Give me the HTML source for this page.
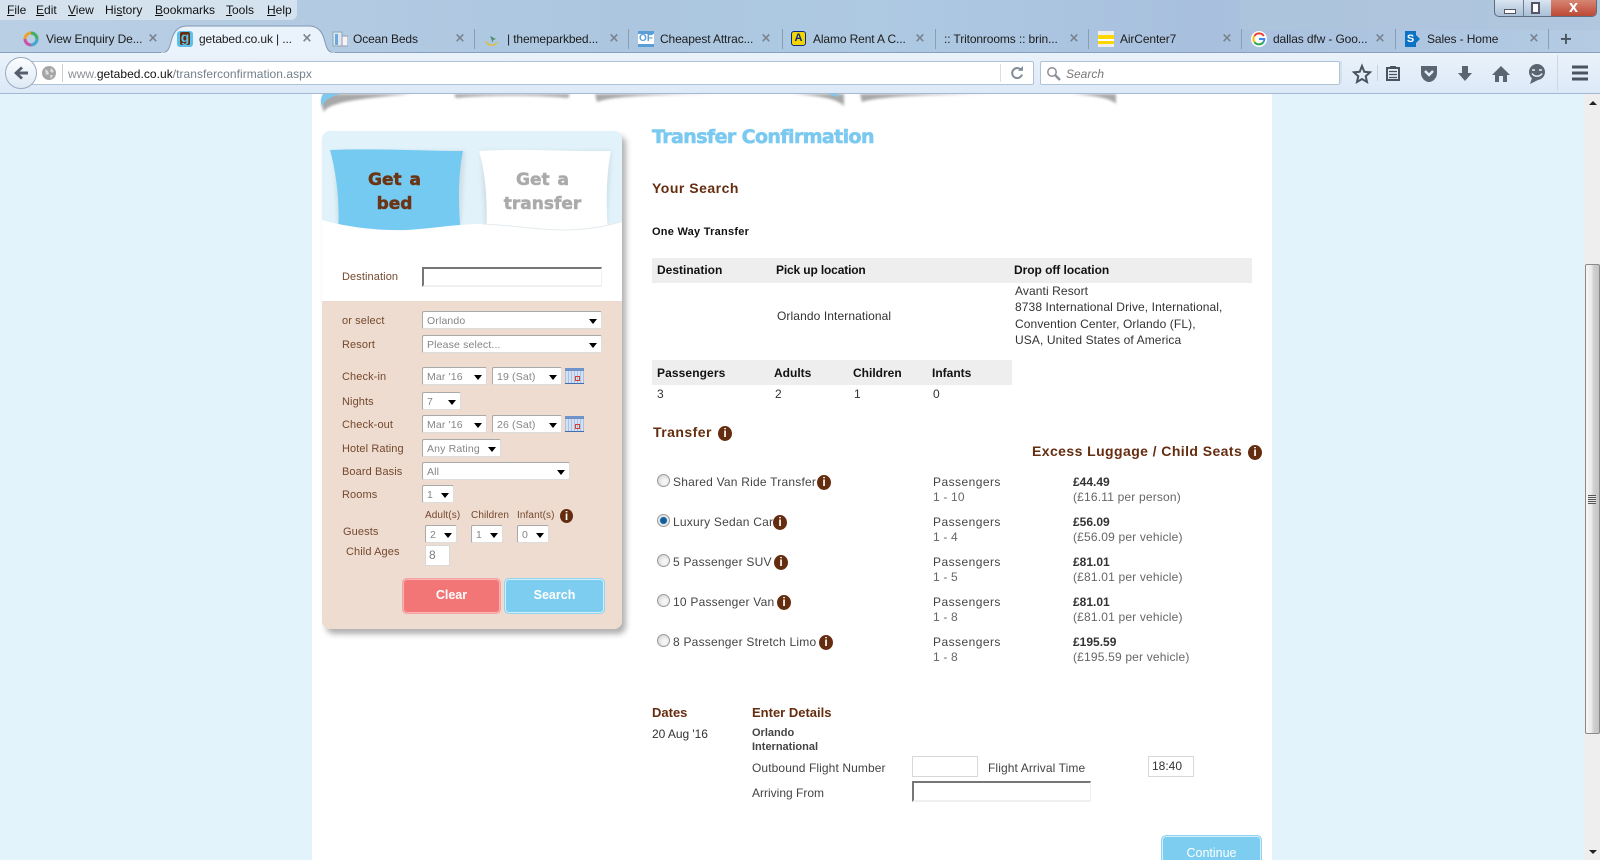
<!DOCTYPE html>
<html lang="en"><head><meta charset="utf-8"><title>getabed.co.uk</title>
<style>
html,body{margin:0;padding:0;width:1600px;height:860px;overflow:hidden;background:#e2f3fb}
body{position:relative;font-family:"Liberation Sans",Arial,sans-serif;font-size:12px;color:#222}
.a,.t,.s,.i,.c{position:absolute}
.t{white-space:nowrap;line-height:16px;height:16px}
.m{font-size:12px;color:#111;top:2px}
.m u{text-decoration:underline}
.tb{font-size:12px;color:#1c1c1c;top:31px;letter-spacing:-.12px}
.c{top:32px;width:14px;height:14px;color:#78818c;font:bold 13px/14px "DejaVu Sans",sans-serif;text-align:center}
.sep{position:absolute;top:29px;width:1px;height:20px;background:#8b9db0}
.l{font-size:11px;color:#74492e;letter-spacing:.1px}
.h{font-weight:bold;color:#652d10}
.b{font-weight:bold;color:#111}
.n{color:#333;letter-spacing:.1px}
.g{color:#666;letter-spacing:.18px}
.r{color:#444;letter-spacing:.45px}
.q{color:#444;letter-spacing:.22px}
.s{background:#fff;border:1px solid #a9a9a9;border-right-color:#ddd;border-bottom-color:#ddd;border-radius:2px;box-sizing:border-box;height:18px;font-size:10.5px;line-height:18px;color:#858585;padding-left:4px;letter-spacing:.15px}
.s:after{content:"";position:absolute;right:4px;top:7px;border:4px solid transparent;border-top:5px solid #000;border-bottom:0}
.i{width:14px;height:15px;border-radius:50%;background:#652d10;color:#fff;font:bold 12px/15px "Liberation Sans",sans-serif;text-align:center}
.inp{position:absolute;background:#fff;box-sizing:border-box;border:1px solid #d8d8d8}
.inset{border-top:2px solid #767676;border-left:2px solid #767676;border-right:1px solid #f0f0f0;border-bottom:2px solid #f0f0f0}
.rad{position:absolute;width:11px;height:11px;border-radius:50%;border:1px solid #9a9a9a;background:radial-gradient(circle at 60% 60%,#f4f4f4 25%,#c8c8c8)}
.btn{position:absolute;box-sizing:border-box;border-radius:5px;color:#fff;font-weight:bold;font-size:12.5px;text-align:center}
.cal{position:absolute;width:19px;height:16px;background:repeating-linear-gradient(90deg,#a8c0e4 0 1px,#d5e1f2 1px 3px);border-top:3px solid #6f93c8;box-sizing:border-box;height:16px;border-bottom:1px solid #3f6db0}
.cal:after{content:"";position:absolute;left:10px;top:5px;width:3px;height:3px;border:1px solid #d6402c}
</style></head><body>

<!-- window chrome -->
<div class="a" style="left:0;top:0;width:1600px;height:53px;background:linear-gradient(90deg,#b9cfe4 0,#acc6e0 40%,#aec9e2 55%,#a8c0de 75%,#b4cbe3 100%);"></div>
<div class="a" style="left:1240px;top:0;width:360px;height:30px;background:#aec4dc;opacity:.7"></div>
<div class="a" style="left:0;top:52px;width:1600px;height:1px;background:#84a0bb"></div>
<div class="a" style="left:0;top:0;width:297px;height:20px;background:#d9e5f0;border-radius:0 0 6px 0;opacity:.85"></div>
<div class="t m" style="left:7px"><u>F</u>ile</div>
<div class="t m" style="left:36px"><u>E</u>dit</div>
<div class="t m" style="left:68px"><u>V</u>iew</div>
<div class="t m" style="left:105px">Hi<u>s</u>tory</div>
<div class="t m" style="left:155px"><u>B</u>ookmarks</div>
<div class="t m" style="left:226px"><u>T</u>ools</div>
<div class="t m" style="left:267px"><u>H</u>elp</div>

<!-- window buttons -->
<div class="a" style="left:1494px;top:-2px;width:103px;height:19px;border:1px solid #5d6d80;border-radius:0 0 5px 5px;background:linear-gradient(#dce7f2,#aabfd6);overflow:hidden;box-sizing:border-box">
 <div class="a" style="left:56px;top:0;width:47px;height:19px;background:linear-gradient(#d98a78,#b8402c)"></div>
 <div class="a" style="left:28px;top:0;width:1px;height:19px;background:#6c7e92"></div>
 <div class="a" style="left:9px;top:10px;width:10px;height:3px;background:#fff;border:1px solid #556"></div>
 <div class="a" style="left:36px;top:3px;width:9px;height:12px;background:#fff;border:2px solid #556;box-sizing:border-box"></div>
 <div class="a" style="left:55px;top:0;width:47px;text-align:center;color:#fff;font:bold 12px/19px 'DejaVu Sans',sans-serif">X</div>
</div>

<!-- tabs -->
<svg class="a" style="left:160px;top:25px" width="176" height="29"><path d="M0 28 C8 28 9 24 11 17 C13 8 17 1 27 1 H149 C159 1 163 8 165 17 C167 24 168 28 176 28 Z" fill="#eaf2fb" stroke="#7f98b2"/><path d="M1 28.500H175" stroke="#eaf2fb" stroke-width="2"/></svg>
<svg class="a" style="left:23px;top:31px" width="16" height="16"><circle cx="8" cy="8" r="6" fill="none" stroke="#f0a030" stroke-width="3"/><path d="M8 2a6 6 0 0 1 6 6" fill="none" stroke="#3fb06a" stroke-width="3"/><path d="M2 8a6 6 0 0 0 6 6" fill="none" stroke="#c752b0" stroke-width="3"/><path d="M14 8a6 6 0 0 1-6 6" fill="none" stroke="#40a8d8" stroke-width="3"/></svg>
<div class="t tb" style="left:46px">View Enquiry De...</div><div class="c" style="left:146px">×</div>
<div class="a" style="left:177px;top:31px;width:16px;height:16px;border-radius:3px;background:#5cc0e8"></div>
<div class="a" style="left:180px;top:32px;width:10px;height:13px;border-radius:2px;background:#652d10"></div>
<div class="t" style="left:177px;top:29px;width:16px;text-align:center;font:bold 14px/16px 'Liberation Sans',sans-serif;color:#5cc0e8">g</div>
<div class="t tb" style="left:199px">getabed.co.uk | ...</div><div class="c" style="left:300px">×</div>
<svg class="a" style="left:332px;top:31px" width="16" height="16"><rect x="1" y="1" width="9" height="14" fill="#dfe8f2" stroke="#8aa"/><rect x="3" y="3" width="3" height="11" fill="#6fa8dc"/><rect x="10" y="5" width="6" height="10" fill="#f2f5f8" stroke="#99a"/></svg>
<div class="t tb" style="left:353px">Ocean Beds</div><div class="c" style="left:453px">×</div><div class="sep" style="left:474px"></div>
<svg class="a" style="left:484px;top:32px" width="16" height="14"><path d="M2 9a6 6 0 0 0 11 1" fill="none" stroke="#d8c040" stroke-width="1.500"/><path d="M6 4l6 3-3 1v3z" fill="#4a9060"/></svg>
<div class="t tb" style="left:507px">| themeparkbed...</div><div class="c" style="left:607px">×</div><div class="sep" style="left:628px"></div>
<div class="a" style="left:638px;top:31px;width:16px;height:16px;background:#fff;border-top:3px solid #5a9ed8;border-bottom:3px solid #5a9ed8;box-sizing:border-box;font:bold 10px/10px 'Liberation Sans',sans-serif;color:#5a9ed8;text-align:center">OF</div>
<div class="t tb" style="left:660px">Cheapest Attrac...</div><div class="c" style="left:759px">×</div><div class="sep" style="left:782px"></div>
<div class="a" style="left:791px;top:31px;width:15px;height:15px;background:#f2d400;border:1.500px solid #0a2a8a;border-radius:3px;box-sizing:border-box;font:bold 11px/12px 'Liberation Sans',sans-serif;color:#0a2a8a;text-align:center">A</div>
<div class="t tb" style="left:813px">Alamo Rent A C...</div><div class="c" style="left:913px">×</div><div class="sep" style="left:935px"></div>
<div class="t tb" style="left:944px">:: Tritonrooms :: brin...</div><div class="c" style="left:1067px">×</div><div class="sep" style="left:1088px"></div>
<div class="a" style="left:1098px;top:31px;width:16px;height:16px;background:linear-gradient(#eee 0 4px,#fed700 4px 8px,#fff 8px 10px,#fed700 10px 13px,#eee 13px)"></div>
<div class="t tb" style="left:1120px">AirCenter7</div><div class="c" style="left:1220px">×</div><div class="sep" style="left:1241px"></div>
<svg class="a" style="left:1251px;top:31px" width="16" height="16"><circle cx="8" cy="8" r="8" fill="#fff"/><path d="M12.800 5A5.500 5.500 0 0 0 3.400 5" fill="none" stroke="#ea4335" stroke-width="2"/><path d="M3.400 5a5.500 5.500 0 0 0 0 6" fill="none" stroke="#fbbc05" stroke-width="2"/><path d="M3.400 11a5.500 5.500 0 0 0 9 0" fill="none" stroke="#34a853" stroke-width="2"/><path d="M8 8h5.400a5.500 5.500 0 0 1-1 3" fill="none" stroke="#4285f4" stroke-width="2"/></svg>
<div class="t tb" style="left:1273px">dallas dfw - Goo...</div><div class="c" style="left:1373px">×</div><div class="sep" style="left:1395px"></div>
<div class="a" style="left:1405px;top:31px;width:11px;height:16px;background:#0b72c4;color:#fff;font:bold 11px/16px 'Liberation Sans',sans-serif;text-align:center">S</div>
<svg class="a" style="left:1415px;top:33px" width="6" height="12"><path d="M0 1l5 5-5 5" fill="#0b72c4"/></svg>
<div class="t tb" style="left:1427px">Sales - Home</div><div class="c" style="left:1527px">×</div><div class="sep" style="left:1548px"></div>
<div class="t" style="left:1558px;top:30px;width:16px;text-align:center;font:bold 16px/18px 'DejaVu Sans',sans-serif;color:#4a5560">+</div>

<!-- toolbar -->
<div class="a" style="left:0;top:53px;width:1600px;height:41px;background:linear-gradient(#eaf2fb,#dce9f7);border-bottom:1px solid #a4b9cf;box-sizing:border-box"></div>
<div class="a" style="left:20px;top:61px;width:1014px;height:24px;background:#fff;border:1px solid #b0c2d6;box-sizing:border-box;border-radius:2px"></div>
<div class="a" style="left:5px;top:57px;width:32px;height:32px;border-radius:50%;background:linear-gradient(#fbfdff,#dfe9f4);border:1px solid #98aac0;box-sizing:border-box"></div>
<svg class="a" style="left:13px;top:65px" width="16" height="16"><path d="M1 8L8 1.500 10 3.500 6.500 6.500H15V9.500H6.500L10 12.500 8 14.500Z" fill="#555f6b"/></svg>
<svg class="a" style="left:42px;top:66px" width="14" height="14"><circle cx="7" cy="7" r="7" fill="#a5a5a5"/><path d="M3 3l3 2 1 3-3 1zM9 2l3 3-2 2-2-2zM8 9l3 0-2 4z" fill="#dcdcdc"/></svg>
<div class="a" style="left:62px;top:64px;width:1px;height:18px;background:#ccc"></div>
<div class="t" style="left:68px;top:66px;font-size:12px;color:#8a8f96;letter-spacing:.04px">www.<span style="color:#111">getabed.co.uk</span><span style="color:#73808e">/transferconfirmation.aspx</span></div>
<div class="a" style="left:1000px;top:64px;width:1px;height:18px;background:#ddd"></div>
<svg class="a" style="left:1010px;top:66px" width="14" height="14"><path d="M11.500 4.500A5 5 0 1 0 12 8.500" fill="none" stroke="#828d98" stroke-width="2"/><path d="M8 4.800H13V0z" fill="#828d98"/></svg>
<div class="a" style="left:1040px;top:61px;width:300px;height:24px;background:#fff;border:1px solid #b0c2d6;box-sizing:border-box;border-radius:2px"></div>
<svg class="a" style="left:1046px;top:66px" width="15" height="15"><circle cx="6" cy="6" r="4.200" fill="none" stroke="#8a8f96" stroke-width="1.500"/><path d="M9 9l5 5" stroke="#8a8f96" stroke-width="2.400"/></svg>
<div class="t" style="left:1066px;top:66px;font-style:italic;color:#777;font-size:12px">Search</div>

<svg class="a" style="left:1340px;top:55px" width="260" height="36">
 <path d="M1 6V28" stroke="#c4d3e2"/>
 <path d="M22 11L24.300 16.800 30 17.300 25.700 21.200 27 27 22 24 17 27 18.300 21.200 14 17.300 19.700 16.800Z" fill="none" stroke="#4a5460" stroke-width="2"/>
 <path d="M37.500 10V26" stroke="#c4d3e2"/>
 <path d="M47 13H59V25H47Z" fill="none" stroke="#4a5460" stroke-width="2"/>
 <path d="M50 11H56V14H50Z" fill="#4a5460"/>
 <path d="M49 16.500H57M49 19.500H57M49 22.500H57" stroke="#4a5460" stroke-width="1.300"/>
 <path d="M81 11H97V18C97 23 93 27 89 27 85 27 81 23 81 18Z" fill="#5a6572"/>
 <path d="M85 16L89 20 93 16" fill="none" stroke="#e4eefa" stroke-width="2.500"/>
 <path d="M122 11H128V18H132L125 26 118 18H122Z" fill="#5a6572"/>
 <path d="M161 11L170 20H167V27H163V21H159V27H155V20H152Z" fill="#5a6572"/>
 <circle cx="197" cy="17" r="8" fill="#5a6572"/><path d="M192 23L190 29 198 25Z" fill="#5a6572"/>
 <path d="M192 15h3M199 15h3" stroke="#e4eefa" stroke-width="1.500"/><path d="M192 18.500C194 22 200 22 202 18.500" fill="none" stroke="#e4eefa" stroke-width="1.500"/>
 <path d="M217.500 0V36" stroke="#c9d8e7"/>
 <path d="M232 12H248M232 18H248M232 24H248" stroke="#4a5460" stroke-width="3"/>
</svg>

<!-- page -->
<div class="a" style="left:312px;top:94px;width:960px;height:766px;background:#fff"></div>
<!-- top wave -->
<svg class="a" style="left:312px;top:94px" width="820" height="22">
 <defs><filter id="f"><feGaussianBlur stdDeviation="1.200"/></filter></defs>
 <g filter="url(#f)" fill="#a8a8a8">
 <path d="M12 0C9 5 9 12 12 18 16 9 40 5 100 0Z"/>
 <path d="M142 0L144 4C170 1 230 1 256 4L258 0Z"/>
 <path d="M283 0L285 8C300 2 340 1 400 0Z"/>
 <path d="M480 0C510 2 525 5 532 12V0Z"/>
 <path d="M548 0L550 8C565 3 600 1 680 0Z"/>
 <path d="M760 0C785 2 798 4 804 10V0Z"/>
 </g>
 <path d="M11 0H28C18 3 13 6 10 12 8 8 9 3 11 0Z" fill="#7ec8ef"/>
 <path d="M516 0H526V3Z" fill="#7ec8ef"/>
</svg>

<!-- sidebar -->
<div class="a" style="left:322px;top:131px;width:300px;height:498px;border-radius:8px;background:#e1f2fa;box-shadow:4px 5px 6px rgba(60,60,60,.4)"></div>
<div class="a" style="left:322px;top:301px;width:300px;height:328px;border-radius:0 0 8px 8px;background:#eedcd0"></div>
<svg class="a" style="left:322px;top:145px" width="300" height="156">
 <defs><filter id="f2"><feGaussianBlur stdDeviation="2"/></filter></defs>
 <path d="M159 6H289L284 90H164Z" fill="#cfdde4" filter="url(#f2)"/>
 <path d="M12 6H143L138 90H16Z" fill="#cfdde4" filter="url(#f2)"/>
 <path d="M8 5C50 3 100 6 141 6 136 30 136 60 139 90L16 90C18 60 15 30 8 5Z" fill="#75caf2"/>
 <path d="M157 6C200 3 250 7 289 6 284 30 284 60 286 90H164C166 60 164 30 157 6Z" fill="#fff"/>
 <path d="M0 75C25 82 55 86 85 85 115 83 135 79 160 79 190 80 215 85 240 85 265 85 285 81 300 77V156H0Z" fill="#fff"/>
 <path d="M160 79C190 80 215 85 240 85 265 85 285 81 298 77" fill="none" stroke="#e3eaee" stroke-width="1"/>
</svg>
<div class="t" style="left:328px;top:168px;width:133px;height:auto;text-align:center;font:bold 17px/24px 'DejaVu Sans',sans-serif;color:#6b3414;-webkit-text-stroke:.5px #6b3414;white-space:normal;word-spacing:2px">Get a<br>bed</div>
<div class="t" style="left:476px;top:168px;width:133px;height:auto;text-align:center;font:bold 17px/24px 'DejaVu Sans',sans-serif;color:#aaa;-webkit-text-stroke:.5px #aaa;white-space:normal;word-spacing:2px">Get a<br>transfer</div>

<div class="t l" style="left:342px;top:269px">Destination</div>
<div class="inp inset" style="left:422px;top:267px;width:180px;height:20px"></div>
<div class="t l" style="left:342px;top:313px">or select</div><div class="s" style="left:422px;top:311px;width:180px">Orlando</div>
<div class="t l" style="left:342px;top:337px">Resort</div><div class="s" style="left:422px;top:335px;width:180px">Please select...</div>
<div class="t l" style="left:342px;top:369px">Check-in</div><div class="s" style="left:422px;top:367px;width:65px">Mar '16</div><div class="s" style="left:492px;top:367px;width:70px">19 (Sat)</div><div class="cal" style="left:565px;top:368px"></div>
<div class="t l" style="left:342px;top:394px">Nights</div><div class="s" style="left:422px;top:392px;width:39px">7</div>
<div class="t l" style="left:342px;top:417px">Check-out</div><div class="s" style="left:422px;top:415px;width:65px">Mar '16</div><div class="s" style="left:492px;top:415px;width:70px">26 (Sat)</div><div class="cal" style="left:565px;top:416px"></div>
<div class="t l" style="left:342px;top:441px">Hotel Rating</div><div class="s" style="left:422px;top:439px;width:79px">Any Rating</div>
<div class="t l" style="left:342px;top:464px">Board Basis</div><div class="s" style="left:422px;top:462px;width:148px">All</div>
<div class="t l" style="left:342px;top:487px">Rooms</div><div class="s" style="left:422px;top:485px;width:32px">1</div>
<div class="t l" style="left:425px;top:508px;font-size:10px">Adult(s)</div><div class="t l" style="left:471px;top:508px;font-size:10px">Children</div><div class="t l" style="left:517px;top:508px;font-size:10px">Infant(s)</div>
<div class="i" style="left:560px;top:509px;width:13px;height:14px;line-height:14px">i</div>
<div class="t l" style="left:343px;top:524px">Guests</div><div class="s" style="left:425px;top:525px;width:32px">2</div><div class="s" style="left:471px;top:525px;width:32px">1</div><div class="s" style="left:517px;top:525px;width:32px">0</div>
<div class="t l" style="left:346px;top:544px">Child Ages</div>
<div class="inp" style="left:425px;top:545px;width:25px;height:21px;font-size:12px;line-height:19px;color:#7d7d7d;padding-left:3px">8</div>
<div class="btn" style="left:402px;top:578px;width:99px;height:36px;background:#f27676;border:1px solid #f7a0a0;box-shadow:inset 0 0 0 1px #f7b5b5;line-height:32px">Clear</div>
<div class="btn" style="left:504px;top:578px;width:101px;height:36px;background:#7dcdf0;border:1px solid #8fd4f2;box-shadow:inset 0 0 0 1px #d5eefa;line-height:32px">Search</div>

<!-- main -->
<div class="t" style="left:652px;top:127px;height:20px;font:bold 19px/20px 'DejaVu Sans',sans-serif;color:#7bc9f0;-webkit-text-stroke:.6px #7bc9f0;letter-spacing:-.6px">Transfer Confirmation</div>
<div class="t h" style="left:652px;top:180px;font-size:14px;letter-spacing:.5px">Your Search</div>
<div class="t b" style="left:652px;top:224px;font-size:11px;letter-spacing:.25px">One Way Transfer</div>

<div class="a" style="left:652px;top:258px;width:600px;height:25px;background:#eee"></div>
<div class="t b" style="left:657px;top:262px">Destination</div><div class="t b" style="left:776px;top:262px;letter-spacing:-.15px">Pick up location</div><div class="t b" style="left:1014px;top:262px;letter-spacing:-.05px">Drop off location</div>
<div class="t n" style="left:777px;top:308px">Orlando International</div>
<div class="t n" style="left:1015px;top:283px">Avanti Resort</div>
<div class="t n" style="left:1015px;top:299px">8738 International Drive, International,</div>
<div class="t n" style="left:1015px;top:316px">Convention Center, Orlando (FL),</div>
<div class="t n" style="left:1015px;top:332px">USA, United States of America</div>

<div class="a" style="left:652px;top:360px;width:360px;height:25px;background:#eee"></div>
<div class="t b" style="left:657px;top:365px;letter-spacing:.1px">Passengers</div><div class="t b" style="left:774px;top:365px">Adults</div><div class="t b" style="left:853px;top:365px">Children</div><div class="t b" style="left:932px;top:365px">Infants</div>
<div class="t n" style="left:657px;top:386px">3</div><div class="t n" style="left:775px;top:386px">2</div><div class="t n" style="left:854px;top:386px">1</div><div class="t n" style="left:933px;top:386px">0</div>

<div class="t h" style="left:653px;top:424px;font-size:14px;letter-spacing:.45px">Transfer</div><div class="i" style="left:718px;top:426px">i</div>
<div class="t h" style="left:1032px;top:443px;font-size:14px;letter-spacing:.42px">Excess Luggage / Child Seats</div><div class="i" style="left:1248px;top:445px">i</div>

<div class="rad" style="left:657px;top:474px"></div><div class="t q" style="left:673px;top:474px">Shared Van Ride Transfer</div><div class="i" style="left:817px;top:475px">i</div>
<div class="t r" style="left:933px;top:474px">Passengers</div><div class="t g" style="left:933px;top:489px">1 - 10</div>
<div class="t" style="left:1073px;top:474px;font-weight:bold;color:#333">£44.49</div><div class="t g" style="left:1073px;top:489px">(£16.11 per person)</div>

<div class="rad" style="left:657px;top:514px;background:radial-gradient(circle,#0f5f9e 0 3px,#e8e8e8 4px)"></div><div class="t q" style="left:673px;top:514px">Luxury Sedan Car</div><div class="i" style="left:773px;top:515px">i</div>
<div class="t r" style="left:933px;top:514px">Passengers</div><div class="t g" style="left:933px;top:529px">1 - 4</div>
<div class="t" style="left:1073px;top:514px;font-weight:bold;color:#333">£56.09</div><div class="t g" style="left:1073px;top:529px">(£56.09 per vehicle)</div>

<div class="rad" style="left:657px;top:554px"></div><div class="t q" style="left:673px;top:554px">5 Passenger SUV</div><div class="i" style="left:774px;top:555px">i</div>
<div class="t r" style="left:933px;top:554px">Passengers</div><div class="t g" style="left:933px;top:569px">1 - 5</div>
<div class="t" style="left:1073px;top:554px;font-weight:bold;color:#333">£81.01</div><div class="t g" style="left:1073px;top:569px">(£81.01 per vehicle)</div>

<div class="rad" style="left:657px;top:594px"></div><div class="t q" style="left:673px;top:594px">10 Passenger Van</div><div class="i" style="left:777px;top:595px">i</div>
<div class="t r" style="left:933px;top:594px">Passengers</div><div class="t g" style="left:933px;top:609px">1 - 8</div>
<div class="t" style="left:1073px;top:594px;font-weight:bold;color:#333">£81.01</div><div class="t g" style="left:1073px;top:609px">(£81.01 per vehicle)</div>

<div class="rad" style="left:657px;top:634px"></div><div class="t q" style="left:673px;top:634px">8 Passenger Stretch Limo</div><div class="i" style="left:819px;top:635px">i</div>
<div class="t r" style="left:933px;top:634px">Passengers</div><div class="t g" style="left:933px;top:649px">1 - 8</div>
<div class="t" style="left:1073px;top:634px;font-weight:bold;color:#333">£195.59</div><div class="t g" style="left:1073px;top:649px">(£195.59 per vehicle)</div>

<div class="t h" style="left:652px;top:705px;font-size:13px">Dates</div><div class="t h" style="left:752px;top:705px;font-size:13px">Enter Details</div>
<div class="t n" style="left:652px;top:726px;letter-spacing:-.05px">20 Aug '16</div>
<div class="t" style="left:752px;top:725px;font-size:11px;font-weight:bold;color:#444">Orlando</div>
<div class="t" style="left:752px;top:739px;font-size:11px;font-weight:bold;color:#444">International</div>
<div class="t n" style="left:752px;top:760px;color:#444">Outbound Flight Number</div>
<div class="inp" style="left:912px;top:756px;width:66px;height:21px"></div>
<div class="t n" style="left:988px;top:760px;color:#444">Flight Arrival Time</div>
<div class="inp" style="left:1148px;top:756px;width:46px;height:21px;line-height:19px;padding-left:3px;color:#333">18:40</div>
<div class="t n" style="left:752px;top:785px;color:#444;letter-spacing:0">Arriving From</div>
<div class="inp inset" style="left:912px;top:781px;width:179px;height:21px"></div>
<div class="btn" style="left:1161px;top:835px;width:101px;height:36px;background:#7dcdf0;border:1px solid #8fd4f2;box-shadow:inset 0 0 0 1px #d5eefa;line-height:34px;font-weight:normal">Continue</div>

<!-- scrollbar -->
<div class="a" style="left:1584px;top:94px;width:16px;height:766px;background:#eee"></div>
<div class="a" style="left:1589px;top:101px;border:4px solid transparent;border-bottom:4px solid #222;border-top:0"></div>
<div class="a" style="left:1589px;top:850px;border:4px solid transparent;border-top:4px solid #222;border-bottom:0"></div>
<div class="a" style="left:1585px;top:264px;width:15px;height:470px;box-sizing:border-box;border:1px solid #8a8a8a;border-radius:2px;background:linear-gradient(90deg,#f6f6f6 0,#ececec 40%,#cfcfcf 60%,#c4c4c4 100%)"></div>
<div class="a" style="left:1588px;top:495px;width:8px;height:9px;background:repeating-linear-gradient(#555 0 1px,#e8e8e8 1px 2px)"></div>
</body></html>
